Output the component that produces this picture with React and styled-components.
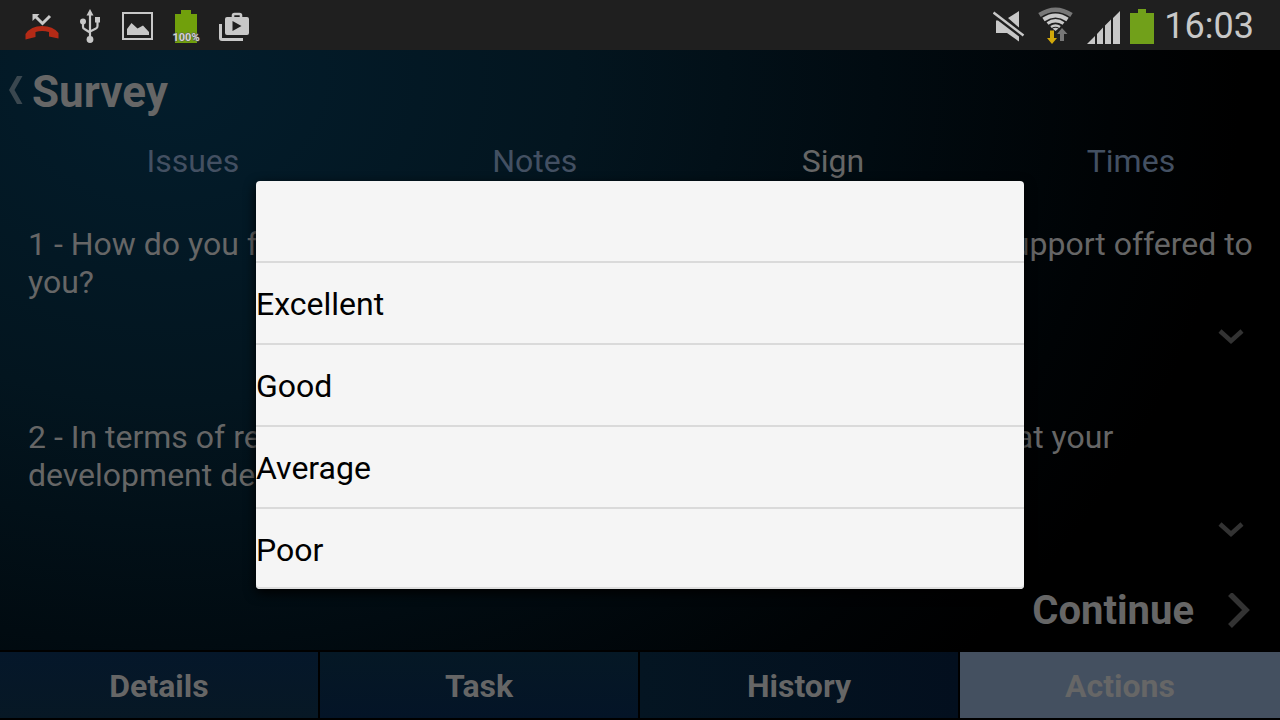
import React from "react";
import styled, { createGlobalStyle } from "styled-components";

const Global = createGlobalStyle`
  * { box-sizing: border-box; }
  body { margin: 0; background: #000; font-family: Roboto, "Liberation Sans", sans-serif; }
  button, select { font-family: inherit; }
`;

const Screen = styled.div`
  position: relative;
  display: flex;
  flex-direction: column;
  min-height: 100vh;
  color: #666;
`;

const StatusBar = styled.header`
  display: flex;
  align-items: center;
  justify-content: space-between;
  height: 50px;
  padding: 0 26px 0 25px;
  background: #1f1f1f;
`;

const StatusGroup = styled.div`
  display: flex;
  align-items: center;
  gap: ${(p) => p.$gap}px;
`;

const StatusIcon = styled.svg`
  display: block;
  flex: none;
`;

const Clock = styled.time`
  padding-top: 2px;
  color: #c8c8c8;
  font-size: 36px;
  line-height: 48px;
`;

const Page = styled.main`
  flex: 1;
  display: flex;
  flex-direction: column;
  background: radial-gradient(ellipse 84% 144% at 13% 4%, #031d2c 0%, #03151f 38%, #010b11 66%, #000305 88%, #000 100%);
`;

const TitleBar = styled.div`
  display: flex;
  align-items: center;
  height: 84px;
  padding-left: 8px;
  gap: 8px;
`;

const BackButton = styled.button`
  display: flex;
  padding: 0 0 4px;
  border: 0;
  background: none;
`;

const Title = styled.h1`
  margin: 0;
  font-size: 44px;
  line-height: 52px;
  font-weight: 700;
`;

const Tabs = styled.nav`
  display: grid;
  grid-template-columns: 22fr 17fr 17fr 17fr;
  height: 54px;
`;

const Tab = styled.button`
  padding: 0;
  border: 0;
  background: none;
  font-size: 32px;
  color: ${(p) => (p.$active ? "#666" : "#435062")};
`;

const Questions = styled.div`
  display: flex;
  flex-direction: column;
  gap: 47px;
  padding: 37px 24px 0 28px;
`;

const Question = styled.label`
  display: block;
  font-size: 32px;
  line-height: 38px;
`;

const SelectRow = styled.div`
  display: grid;
  align-items: center;
  height: 70px;

  > * { grid-area: 1 / 1; }
  > svg { justify-self: end; margin-right: 11px; pointer-events: none; }
`;

const Select = styled.select`
  width: 100%;
  height: 70px;
  border: 0;
  outline: 0;
  appearance: none;
  background: transparent;
  color: #666;
  font-size: 32px;
`;

const ContinueRow = styled.div`
  flex: 1;
  display: flex;
  align-items: center;
  justify-content: flex-end;
  padding: 8px 28px 0;
`;

const ContinueButton = styled.button`
  display: flex;
  align-items: center;
  gap: 32px;
  padding: 0;
  border: 0;
  background: none;
  color: #666;
  font-size: 40px;
  line-height: 48px;
  font-weight: 700;
`;

const BottomNav = styled.nav`
  display: grid;
  grid-template-columns: repeat(4, 1fr);
  padding: 2px 0;
  background: #000;
`;

const NavButton = styled.button`
  height: 66px;
  padding: 2px 0 0;
  border: 0;
  border-right: 2px solid #000;
  background: ${(p) => p.$fill};
  color: #666;
  font-size: 32px;
  font-weight: 700;

  &:last-child { border-right: 0; }
`;

const Overlay = styled.div`
  position: absolute;
  inset: 50px 0 0;
  display: flex;
  align-items: center;
  justify-content: center;
`;

const Popup = styled.div`
  width: 60%;
  border-radius: 4px;
  overflow: hidden;
  background: #f5f5f5;
  box-shadow: 0 4px 12px #000, inset 0 -2px 0 #dedede;
`;

const Choice = styled.button`
  display: block;
  width: 100%;
  height: 80px;
  padding: 2px 0 0;
  border: 0;
  background: none;
  color: #000;
  font-size: 32px;
  line-height: 38px;
  text-align: left;

  & + & { height: 82px; border-top: 2px solid #dadada; }
`;

const light = "#c8c8c8";

const MissedCallIcon = () => (
  <StatusIcon width="36" height="50" viewBox="25 0 36 50" aria-hidden="true">
    <path d="M34.5 15.5 42.5 23.5 50 16" fill="none" stroke={light} strokeWidth="3" />
    <path d="M32.500 21V14H39.500L37 16.500 35 18.500Z" fill={light} />
    <path d="M25.500 39.500V34Q31 26 42 26 53 26 58.500 33V38.500L49 36.500V32Q42 30 35.500 32V37Z" fill="#b42a16" />
  </StatusIcon>
);

const UsbIcon = () => (
  <StatusIcon width="24" height="50" viewBox="78 0 24 50" aria-hidden="true">
    <g fill="none" stroke={light} strokeWidth="2.200">
      <path d="M90 14V40M83 22V27Q83 28.500 84.500 29L90 32.500M97.500 20V26Q97.500 28 96 28.500L90 31.500" />
    </g>
    <g fill={light}>
      <path d="M90 9 93.500 15.500H86.500Z" />
      <circle cx="83" cy="21.500" r="3" />
      <circle cx="90" cy="39.500" r="3.400" />
      <path d="M95 17h5v5.500h-5z" />
    </g>
  </StatusIcon>
);

const PictureIcon = () => (
  <StatusIcon width="35" height="50" viewBox="119 0 35 50" aria-hidden="true">
    <path d="M123 13h29v26h-29z" fill="none" stroke={light} strokeWidth="2" />
    <path d="M127 35V29L131.500 23 137.500 28.500 143 25.500 149 32V35Z" fill={light} />
  </StatusIcon>
);

const BatteryPercentIcon = () => (
  <StatusIcon width="30" height="50" viewBox="171 0 30 50" aria-label="Battery 100%">
    <path d="M175 14h6v-4h10v4h6v29h-22z" fill="#71a00c" />
    <text x="186" y="41" textAnchor="middle" fontFamily="Roboto, sans-serif" fontSize="11" fontWeight="700" fill="#d4d4d4" stroke="#555" strokeWidth="1" paintOrder="stroke">100%</text>
  </StatusIcon>
);

const MediaStoreIcon = () => (
  <StatusIcon width="32" height="50" viewBox="218 0 32 50" aria-hidden="true">
    <path d="M220.500 24V38Q220.500 39.500 222 39.500H243" fill="none" stroke={light} strokeWidth="3" />
    <path d="M233 17V15.500Q233 14 234.500 14H239.500Q241 14 241 15.500V17" fill="none" stroke={light} strokeWidth="2.600" />
    <path fillRule="evenodd" d="M227 17H247Q249 17 249 19V33Q249 35 247 35H227Q225 35 225 33V19Q225 17 227 17ZM232.500 21V31L241.500 26Z" fill={light} />
  </StatusIcon>
);

const MuteIcon = () => (
  <StatusIcon width="33" height="50" viewBox="993 0 33 50" aria-hidden="true">
    <path d="M1008 18 1019 11V27.500Z" fill={light} />
    <path d="M996 20.500H998L1019 36.500V41.500L1007 33H996Z" fill={light} />
    <path d="M993.500 12.500 1023.500 35.500" stroke={light} strokeWidth="2.400" />
  </StatusIcon>
);

const WifiIcon = () => (
  <StatusIcon width="39" height="50" viewBox="1036 0 39 50" aria-hidden="true">
    <g fill="none">
      <path d="M1039.500 15Q1055.500 4.500 1071.500 15" stroke="#777" strokeWidth="4.500" />
      <path d="M1043.500 19.500Q1055.500 11.500 1067.500 19.500" stroke={light} strokeWidth="4" />
      <path d="M1047.500 23.500Q1055.500 18 1063.500 23.500" stroke={light} strokeWidth="3.200" />
      <path d="M1051 27Q1055.500 24 1060 27" stroke={light} strokeWidth="2.600" />
    </g>
    <path d="M1052.500 28.500Q1055.500 27 1058.500 28.500L1055.500 31Z" fill={light} />
    <path d="M1050 30.500H1054V38H1057L1052 44 1047 38H1050Z" fill="#d2a80a" />
    <path d="M1062 28 1067.500 34H1064V41H1060V34H1057Z" fill="#777" />
  </StatusIcon>
);

const SignalIcon = () => (
  <StatusIcon width="35" height="50" viewBox="1085 0 35 50" aria-hidden="true">
    <path d="M1087 44 1095 36V44ZM1097 34 1103 27.500V44H1097ZM1105 25.500 1111 19.500V44H1105ZM1113 18 1120 11V44H1113Z" fill={light} />
  </StatusIcon>
);

const BatteryIcon = () => (
  <StatusIcon width="24" height="50" viewBox="1130 0 24 50" aria-hidden="true">
    <path d="M1130 13h8V9h8v4h8v31h-24z" fill="#71a01a" />
  </StatusIcon>
);

const DownChevron = () => (
  <svg width="28" height="18" viewBox="0 0 28 18" aria-hidden="true">
    <path d="M3 4 14 14 25 4" fill="none" stroke="#333" strokeWidth="4.500" />
  </svg>
);

const tabs = ["Issues", "Notes", "Sign", "Times"];

const questions = [
  "1 - How do you feel about the overall quality of the service team and support offered to you?",
  "2 - In terms of resolving your problems and any issues, do you think that your development desk was helpful?",
];

const choices = ["", "Excellent", "Good", "Average", "Poor"];

const navItems = [
  { label: "Details", fill: "linear-gradient(#05172a, #071825)" },
  { label: "Task", fill: "linear-gradient(#051825, #041427)" },
  { label: "History", fill: "linear-gradient(90deg, #041522, #030f1e)" },
  { label: "Actions", fill: "#445060" },
];

export default function App() {
  return (
    <>
      <Global />
      <Screen>
        <StatusBar>
          <StatusGroup $gap={17}>
            <MissedCallIcon />
            <UsbIcon />
            <PictureIcon />
            <BatteryPercentIcon />
            <MediaStoreIcon />
          </StatusGroup>
          <StatusGroup $gap={10}>
            <MuteIcon />
            <WifiIcon />
            <SignalIcon />
            <BatteryIcon />
            <Clock>16:03</Clock>
          </StatusGroup>
        </StatusBar>

        <Page>
          <TitleBar>
            <BackButton aria-label="Back">
              <svg width="16" height="28" viewBox="0 0 16 28" aria-hidden="true">
                <path d="M9 0H14.500L6.500 14 14.500 28H9L1 14Z" fill="#3a474f" />
              </svg>
            </BackButton>
            <Title>Survey</Title>
          </TitleBar>
          <Tabs>
            {tabs.map((tab) => (
              <Tab key={tab} $active={tab === "Sign"}>{tab}</Tab>
            ))}
          </Tabs>
          <Questions>
            {questions.map((text, i) => (
              <div key={text}>
                <Question htmlFor={`question-${i}`}>{text}</Question>
                <SelectRow>
                  <Select id={`question-${i}`} defaultValue="">
                    {choices.map((choice) => (
                      <option key={choice} value={choice}>{choice}</option>
                    ))}
                  </Select>
                  <DownChevron />
                </SelectRow>
              </div>
            ))}
          </Questions>
          <ContinueRow>
            <ContinueButton>
              Continue
              <svg width="26" height="36" viewBox="0 0 26 36" aria-hidden="true">
                <path d="M4 1 20 17 4 33" fill="none" stroke="#333" strokeWidth="5.500" />
              </svg>
            </ContinueButton>
          </ContinueRow>
        </Page>

        <BottomNav>
          {navItems.map((item) => (
            <NavButton key={item.label} $fill={item.fill}>{item.label}</NavButton>
          ))}
        </BottomNav>

        <Overlay>
          <Popup role="listbox" aria-label="Answer">
            {choices.map((choice) => (
              <Choice key={choice} role="option" aria-label={choice || "No answer"}>{choice}</Choice>
            ))}
          </Popup>
        </Overlay>
      </Screen>
    </>
  );
}
